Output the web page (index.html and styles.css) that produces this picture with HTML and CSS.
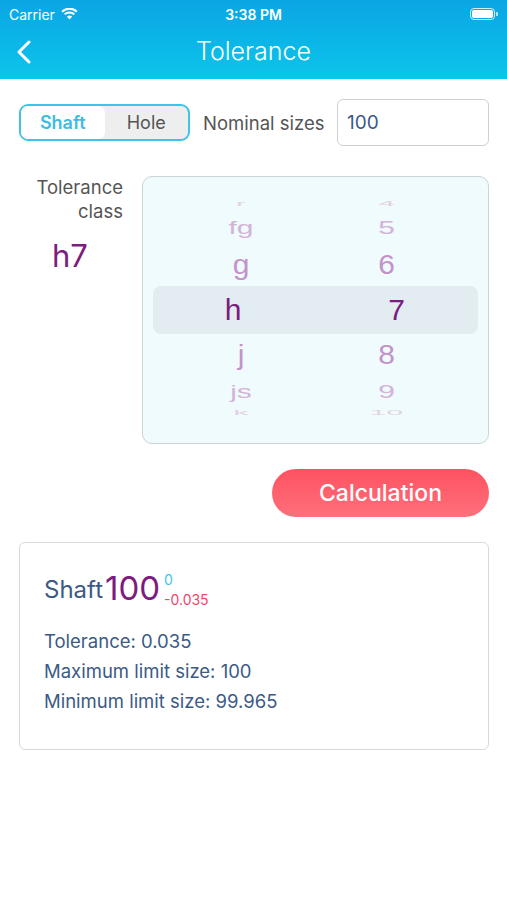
FILE: index.html
```html
<!DOCTYPE html>
<html lang="en">
  <head>
    <meta charset="UTF-8" />
    <meta name="viewport" content="width=device-width, initial-scale=1.0" />
    <title>Tolerance</title>
    <link rel="stylesheet" href="styles.css">
  </head>
  <body>
    <header class="top-bar">
      <div class="status-bar">
        <div class="status-left">
          <span>Carrier</span>
          <svg class="wifi" width="17" height="12" viewBox="0 0 17 12">
            <path d="M8.5 11.5 L5.9 8.6 A3.8 3.8 0 0 1 11.1 8.6 Z" fill="#fff"/>
            <path d="M3.6 6.4 A7 7 0 0 1 13.4 6.4" stroke="#fff" stroke-width="2" fill="none"/>
            <path d="M1.1 3.7 A10.6 10.6 0 0 1 15.9 3.7" stroke="#fff" stroke-width="2" fill="none"/>
          </svg>
        </div>
        <div class="status-time">3:38 PM</div>
        <div class="status-right">
          <div class="battery"><div class="battery-fill"></div></div>
          <div class="battery-nub"></div>
        </div>
      </div>
      <div class="nav-bar">
        <svg class="back" width="16" height="24" viewBox="0 0 16 24">
          <path d="M13 2 L3 12 L13 22" stroke="#fff" stroke-width="3" fill="none" stroke-linecap="round" stroke-linejoin="round"/>
        </svg>
        <div class="nav-title">Tolerance</div>
      </div>
    </header>

    <main class="content">
      <div class="input-row">
        <div class="segment">
          <div class="segment-item active">Shaft</div>
          <div class="segment-item">Hole</div>
        </div>
        <div class="input-label">Nominal sizes</div>
        <div class="input-box">100</div>
      </div>

      <div class="class-row">
        <div class="class-side">
          <div class="class-label">Tolerance<br>class</div>
          <div class="class-value">h7</div>
        </div>
        <div class="picker">
          <div class="pick-row far3 top3"><span>r</span><span>4</span></div>
          <div class="pick-row far2 top2"><span>fg</span><span>5</span></div>
          <div class="pick-row far1 top1"><span>g</span><span>6</span></div>
          <div class="pick-row selected"><span class="shift-left">h</span><span class="shift">7</span></div>
          <div class="pick-row far1 bot1"><span>j</span><span>8</span></div>
          <div class="pick-row far2 bot2"><span>js</span><span>9</span></div>
          <div class="pick-row far3 bot3"><span>k</span><span>10</span></div>
        </div>
      </div>

      <div class="action-row">
        <button class="calc-btn">Calculation</button>
      </div>

      <div class="result-card">
        <div class="result-head">
          <span class="result-type">Shaft</span>
          <span class="result-size">100</span>
          <span class="result-dev">
            <span class="dev-upper">0</span>
            <span class="dev-lower">-0.035</span>
          </span>
        </div>
        <div class="result-lines">
          <div>Tolerance: 0.035</div>
          <div>Maximum limit size: 100</div>
          <div>Minimum limit size: 99.965</div>
        </div>
      </div>
    </main>
  </body>
</html>
```

FILE: styles.css
```css
* {
  margin: 0;
  padding: 0;
  box-sizing: border-box;
}

body {
  font-family: "Inter", "Liberation Sans", sans-serif;
  background: #fff;
  width: 507px;
  height: 900px;
  overflow: hidden;
}

/* Header */
.top-bar {
  height: 79px;
  background: linear-gradient(#0aa5e4, #0cc5ea);
  color: #fff;
}

.status-bar {
  height: 28px;
  display: flex;
  align-items: center;
  justify-content: space-between;
  padding: 0 9px;
  font-size: 14px;
}

.status-left {
  display: flex;
  align-items: center;
  gap: 6px;
  width: 100px;
}

.status-time {
  font-weight: 600;
  font-size: 14px;
}

.status-right {
  width: 100px;
  display: flex;
  justify-content: flex-end;
  align-items: center;
  gap: 1px;
}

.battery {
  width: 25px;
  height: 12px;
  border: 1px solid rgba(255, 255, 255, 0.8);
  border-radius: 4px;
  padding: 1px;
}

.battery-fill {
  width: 100%;
  height: 100%;
  background: #fff;
  border-radius: 2px;
}

.battery-nub {
  width: 2px;
  height: 4px;
  background: rgba(255, 255, 255, 0.7);
  border-radius: 0 1px 1px 0;
}

.nav-bar {
  height: 51px;
  display: flex;
  align-items: center;
  padding-left: 16px;
}

.nav-title {
  flex: 1;
  text-align: center;
  font-size: 25px;
  font-weight: 300;
  margin-right: 32px;
  margin-top: -6px;
}

.back {
  margin-top: -4px;
}

/* Content */
.content {
  padding: 20px 18px 0 19px;
}

.input-row {
  display: flex;
  align-items: center;
  height: 47px;
}

.segment {
  display: flex;
  width: 171px;
  height: 37px;
  border: 2px solid #41c3e8;
  border-radius: 9px;
  background: #eeeeee;
  overflow: hidden;
}

.segment-item {
  flex: 1;
  display: flex;
  align-items: center;
  justify-content: center;
  font-size: 18px;
  color: #555;
}

.segment-item.active {
  background: #fff;
  color: #3cbde4;
  font-weight: 600;
  border-radius: 0 7px 7px 0;
}

.input-label {
  margin-left: 13px;
  font-size: 18.5px;
  color: #555;
}

.input-box {
  margin-left: auto;
  width: 152px;
  height: 47px;
  border: 1px solid #cfcfcf;
  border-radius: 6px;
  display: flex;
  align-items: center;
  padding-left: 9px;
  font-size: 19px;
  color: #3b5a86;
}

.class-row {
  display: flex;
  margin-top: 30px;
}

.class-side {
  width: 104px;
  margin-right: 19px;
}

.class-label {
  text-align: right;
  font-size: 18.5px;
  line-height: 24px;
  color: #555;
  margin-top: -1px;
}

.class-value {
  font-size: 31px;
  color: #7c1b80;
  padding-left: 33px;
  margin-top: 14px;
}

/* Picker */
.picker {
  flex: 1;
  height: 268px;
  background: #effbfd;
  border: 1px solid #cdd4d6;
  border-radius: 10px;
  padding: 18px 10px 0;
  display: flex;
  flex-direction: column;
}

.pick-row {
  display: flex;
  align-items: center;
  flex-shrink: 0;
  font-family: "Liberation Sans", sans-serif;
  font-size: 30px;
  color: #7c1b80;
}

.pick-row span {
  text-align: center;
  display: block;
  line-height: 1;
}

.pick-row span:first-child {
  width: 176px;
}

.pick-row span:last-child {
  flex: 1;
  padding-right: 34px;
}

.pick-row.selected {
  height: 48px;
  background: #e3edf1;
  border-radius: 8px;
}

.pick-row .shift {
  padding-left: 20px;
}

.pick-row .shift-left {
  padding-right: 16px;
}

.top3 { height: 18px; }
.top2 { height: 30px; }
.top1 { height: 43px; }
.bot1 { height: 42px; }
.bot2 { height: 32px; }
.bot3 { height: 10px; }

.far1 { color: #c393c9; }
.far2 { color: #d3b3d8; }
.far3 { color: #e2d0e5; }

.far1 span { transform: scaleY(0.9); }
.far2 span { transform: scaleY(0.62); }
.far3 span { transform: scaleY(0.22); }

/* Button */
.action-row {
  display: flex;
  justify-content: flex-end;
  margin-top: 25px;
}

.calc-btn {
  width: 217px;
  height: 48px;
  border: none;
  border-radius: 24px;
  background: linear-gradient(#fe5260, #ff6f7c);
  color: #fff;
  font-family: "Inter", "Liberation Sans", sans-serif;
  font-size: 23px;
  font-weight: 500;
}

/* Result card */
.result-card {
  margin-top: 25px;
  height: 208px;
  border: 1px solid #d9d9d9;
  border-radius: 6px;
  padding: 24px 24px 0;
}

.result-head {
  display: flex;
  align-items: center;
  color: #3b5a86;
}

.result-type {
  font-size: 24px;
  margin-top: 2px;
}

.result-size {
  font-size: 33px;
  color: #7c1b80;
  margin-left: 2px;
}

.result-dev {
  display: flex;
  flex-direction: column;
  margin-left: 4px;
  font-size: 14px;
  line-height: 18px;
  margin-top: 4px;
}

.dev-upper {
  color: #3ec6ea;
}

.dev-lower {
  color: #ef466c;
  margin-top: 2px;
}

.result-lines {
  margin-top: 17px;
  font-size: 18.5px;
  line-height: 30px;
  color: #3b5a86;
}
```
